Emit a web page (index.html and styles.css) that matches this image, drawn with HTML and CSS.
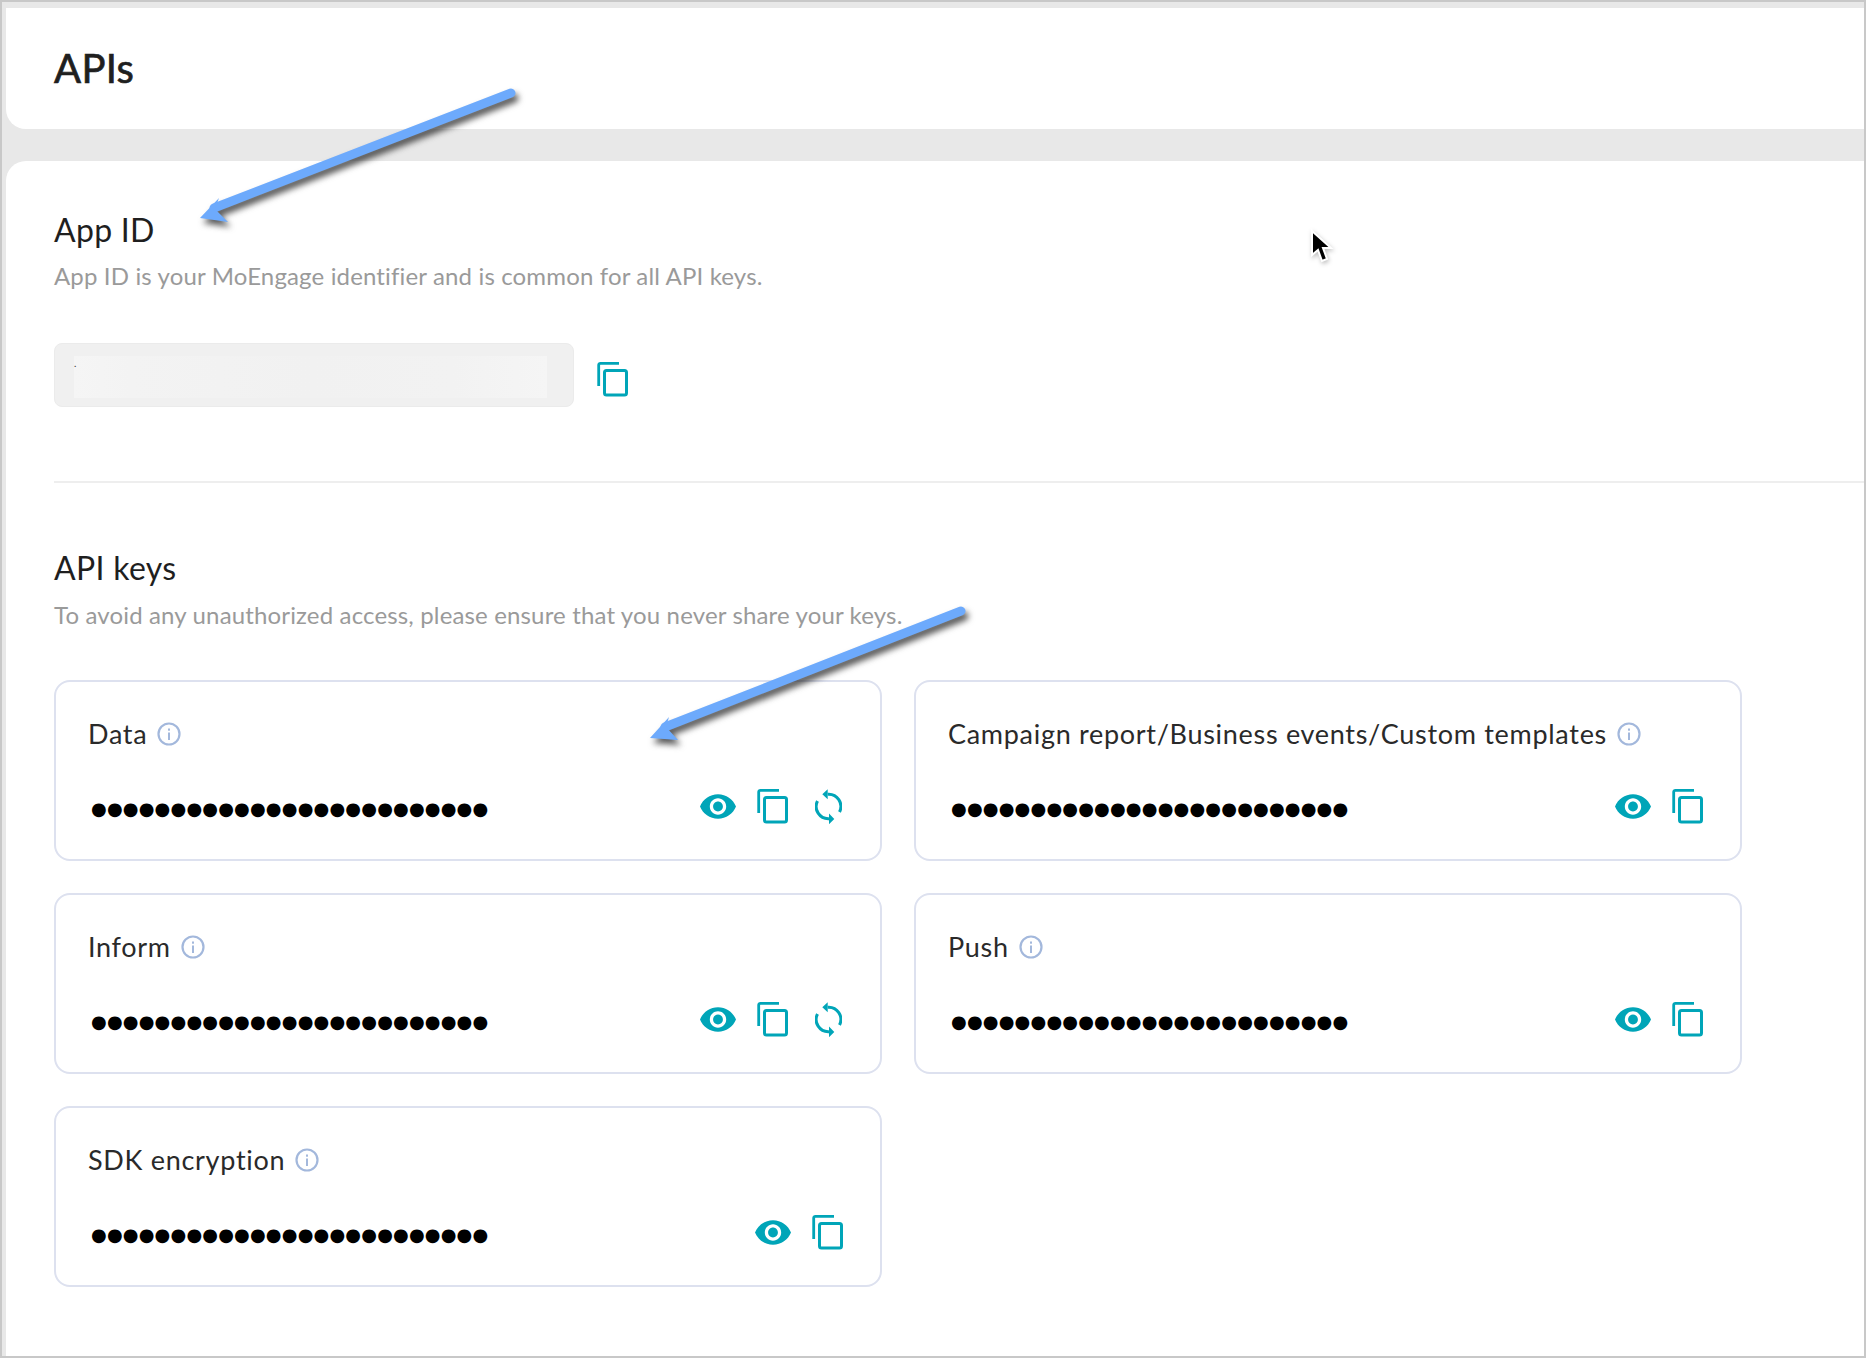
FILE: index.html
```html
<!DOCTYPE html>
<html lang="en">
<head>
<meta charset="utf-8">
<title>APIs</title>
<link rel="stylesheet" href="styles.css">
</head>
<body>
<svg width="0" height="0" class="defs">
  <symbol id="i-eye" viewBox="1 4.5 22 15"><path fill-rule="evenodd" d="M12 4.5C7 4.5 2.73 7.61 1 12c1.73 4.39 6 7.5 11 7.5s9.27-3.11 11-7.5c-1.73-4.39-6-7.5-11-7.5zM12 17c-2.76 0-5-2.24-5-5s2.24-5 5-5 5 2.24 5 5-2.24 5-5 5zm0-8c-1.66 0-3 1.34-3 3s1.34 3 3 3 3-1.34 3-3-1.34-3-3-3z"/></symbol>
  <symbol id="i-copy" viewBox="0 0 31 36"><path d="M1.7 25V4a1.7 1.7 0 0 1 1.7-1.7H22" fill="none" stroke="currentColor" stroke-width="2.8"/><rect x="7.5" y="9.5" width="22" height="24.5" rx="2" fill="none" stroke="currentColor" stroke-width="3"/></symbol>
  <symbol id="i-sync" viewBox="0 0 27 35"><path d="M12.7 5.3A12.2 12.2 0 0 1 24.5 23" fill="none" stroke="currentColor" stroke-width="3"/><path d="M14 29.7A12.2 12.2 0 0 1 2.5 12" fill="none" stroke="currentColor" stroke-width="3"/><path d="M7.3 5.3L12.7 .3V10.3zM19.3 30L14 24.5V35.2z"/></symbol>
  <symbol id="i-info" viewBox="0 0 24 24"><circle cx="12" cy="12" r="10.5" fill="none" stroke="currentColor" stroke-width="2.2"/><rect x="11" y="10.5" width="2" height="7.5"/><rect x="11" y="6.5" width="2" height="2.2"/></symbol>
</svg>
<div class="frame">
  <header class="page-head"><h1 class="page-title">APIs</h1></header>
  <main class="content">
    <section class="app-id">
      <h2 class="sec-title">App ID</h2>
      <p class="sec-sub sub-app">App ID is your MoEngage identifier and is common for all API keys.</p>
      <div class="id-row">
        <div class="id-field"><div class="id-blur">.</div></div>
        <svg class="ic ic-copy ic-copy-id"><use href="#i-copy"/></svg>
      </div>
    </section>
    <section class="api-keys">
      <h2 class="sec-title">API keys</h2>
      <p class="sec-sub sub-keys">To avoid any unauthorized access, please ensure that you never share your keys.</p>
      <div class="key-grid">
        <article class="key-card">
          <div class="key-label">Data <svg class="info"><use href="#i-info"/></svg></div>
          <div class="key-row"><span class="dots">●●●●●●●●●●●●●●●●●●●●●●●●●</span>
            <div class="actions"><svg class="ic ic-eye"><use href="#i-eye"/></svg><svg class="ic ic-copy"><use href="#i-copy"/></svg><svg class="ic ic-sync"><use href="#i-sync"/></svg></div></div>
        </article>
        <article class="key-card">
          <div class="key-label">Campaign report/Business events/Custom templates <svg class="info"><use href="#i-info"/></svg></div>
          <div class="key-row"><span class="dots">●●●●●●●●●●●●●●●●●●●●●●●●●</span>
            <div class="actions"><svg class="ic ic-eye"><use href="#i-eye"/></svg><svg class="ic ic-copy"><use href="#i-copy"/></svg></div></div>
        </article>
        <article class="key-card">
          <div class="key-label">Inform <svg class="info"><use href="#i-info"/></svg></div>
          <div class="key-row"><span class="dots">●●●●●●●●●●●●●●●●●●●●●●●●●</span>
            <div class="actions"><svg class="ic ic-eye"><use href="#i-eye"/></svg><svg class="ic ic-copy"><use href="#i-copy"/></svg><svg class="ic ic-sync"><use href="#i-sync"/></svg></div></div>
        </article>
        <article class="key-card">
          <div class="key-label">Push <svg class="info"><use href="#i-info"/></svg></div>
          <div class="key-row"><span class="dots">●●●●●●●●●●●●●●●●●●●●●●●●●</span>
            <div class="actions"><svg class="ic ic-eye"><use href="#i-eye"/></svg><svg class="ic ic-copy"><use href="#i-copy"/></svg></div></div>
        </article>
        <article class="key-card">
          <div class="key-label">SDK encryption <svg class="info"><use href="#i-info"/></svg></div>
          <div class="key-row"><span class="dots">●●●●●●●●●●●●●●●●●●●●●●●●●</span>
            <div class="actions"><svg class="ic ic-eye"><use href="#i-eye"/></svg><svg class="ic ic-copy"><use href="#i-copy"/></svg></div></div>
        </article>
      </div>
    </section>
  </main>
  <svg class="overlay" width="1866" height="1358" viewBox="0 0 1866 1358">
    <g class="arrow">
      <path d="M511 93L214 208" class="shaft"/>
      <path d="M200 218L219 198L215 209L228 222Z" class="head"/>
    </g>
    <g class="arrow">
      <path d="M961 611L665 727" class="shaft"/>
      <path d="M650 738L669 717L666 727L678 740Z" class="head"/>
    </g>
    <path class="cursor" d="M1312 231V255L1318 250L1322 261L1327 259L1323 248L1331 248Z"/>
  </svg>
</div>
</body>
</html>
```
FILE: styles.css
```css
* { box-sizing: border-box; }
html, body { margin: 0; padding: 0; background: #fff; }
.defs { position: absolute; }
.frame {
  position: relative;
  width: 1866px;
  height: 1358px;
  border: 2px solid #c8c8c8;
  background: #e8e8e8;
  padding: 6px 0 0 4px;
  display: flex;
  flex-direction: column;
  gap: 32px;
  overflow: hidden;
  font-family: Lato, "Liberation Sans", sans-serif;
}
.page-head {
  height: 121px;
  flex: none;
  background: #fff;
  border-bottom-left-radius: 20px;
  padding: 36px 0 0 48px;
}
.page-title {
  margin: 0;
  font-size: 40px;
  line-height: 48px;
  font-weight: 400;
  letter-spacing: 0.3px;
  -webkit-text-stroke: 0.7px #1f1f1f;
  color: #1f1f1f;
}
.content {
  flex: 1;
  background: #fff;
  border-top-left-radius: 20px;
  padding: 50px 0 0 48px;
}
.app-id {
  height: 272px;
  border-bottom: 2px solid #eeeeee;
}
.sec-title {
  margin: 0;
  font-size: 32px;
  line-height: 38px;
  font-weight: 400;
  letter-spacing: 0.3px;
  color: #1f1f1f;
}
.sec-sub {
  font-size: 24px;
  line-height: 32px;
  letter-spacing: 0.15px;
  color: #9a9a9a;
}
.sub-app { margin: 11px 0 0; }
.sub-keys { margin: 12px 0 0; }
.id-row {
  display: flex;
  align-items: center;
  gap: 23px;
  margin-top: 51px;
}
.id-field {
  width: 520px;
  height: 64px;
  background: #f0f0f0;
  border: 1px solid #ebebeb;
  border-radius: 8px;
  padding: 12px 26px 8px 19px;
}
.id-blur {
  height: 42px;
  font-size: 10px;
  line-height: 14px;
  color: #333;
  background: linear-gradient(90deg, #f5f5f5, #f3f3f3 12%, #f1f1f1 50%, #f2f2f2 80%, #f5f5f5);
}
.ic { flex: none; color: #00a5b8; fill: #00a5b8; display: block; }
.ic-eye { width: 36px; height: 25px; }
.ic-copy { width: 31px; height: 36px; }
.ic-sync { width: 27px; height: 35px; margin-left: 6px; }
.ic-copy:last-child { margin-right: -1px; }
.ic-copy-id { margin-top: 8px; }
.api-keys { padding-top: 66px; }
.key-grid {
  display: grid;
  grid-template-columns: 828px 828px;
  grid-auto-rows: 181px;
  column-gap: 32px;
  row-gap: 32px;
  margin-top: 49px;
}
.key-card {
  border: 2px solid #dde1ef;
  border-radius: 16px;
  padding: 35px 35px 0 32px;
}
.key-label {
  display: flex;
  align-items: center;
  gap: 10px;
  font-size: 27px;
  line-height: 34px;
  letter-spacing: 0.7px;
  color: #2a2a2a;
}
.info { width: 24px; height: 24px; color: #a3b8dc; fill: #a3b8dc; }
.key-row {
  display: flex;
  align-items: center;
  justify-content: space-between;
  margin-top: 37px;
}
.dots {
  font-family: "DejaVu Sans", sans-serif;
  font-size: 18px;
  line-height: 36px;
  letter-spacing: 0.19px;
  color: #000;
  margin-left: 3px;
}
.actions {
  display: flex;
  align-items: center;
  gap: 21px;
  margin-right: 3px;
  margin-bottom: 6px;
}
.overlay { position: absolute; left: -2px; top: -2px; pointer-events: none; }
.arrow { filter: drop-shadow(3px 5px 3px rgba(30,30,30,.75)); }
.shaft { stroke: #6daafc; stroke-width: 9; stroke-linecap: round; fill: none; }
.head { fill: #6daafc; }
.cursor { fill: #000; stroke: #fff; stroke-width: 2; filter: drop-shadow(1px 2px 2px rgba(0,0,0,.25)); }
```
